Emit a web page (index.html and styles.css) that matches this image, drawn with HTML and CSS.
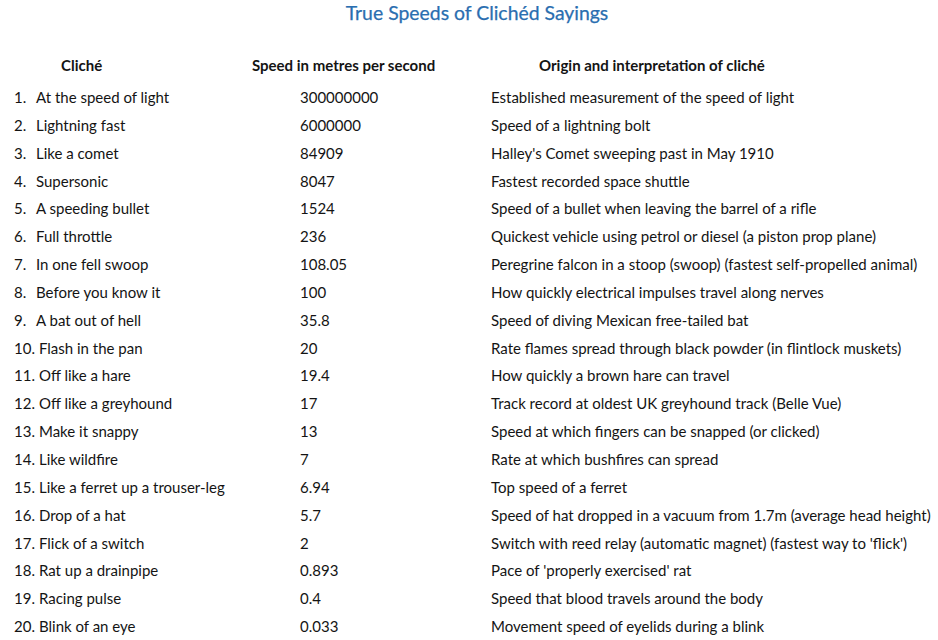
FILE: index.html
```html
<!DOCTYPE html>
<html>
<head>
<meta charset="utf-8">
<link rel="stylesheet" href="styles.css">
</head>
<body>
<div class="page">
  <h1 class="title">True Speeds of Clichéd Sayings</h1>
  <div class="table">
    <div class="row head">
      <div class="c1"><span class="h1c">Cliché</span></div>
      <div class="c2"><span class="h2c">Speed in metres per second</span></div>
      <div class="c3"><span class="h3c">Origin and interpretation of cliché</span></div>
    </div>
    <div class="row"><div class="c1"><span class="n">1.</span><span class="t">At the speed of light</span></div><div class="c2">300000000</div><div class="c3">Established measurement of the speed of light</div></div>
    <div class="row"><div class="c1"><span class="n">2.</span><span class="t">Lightning fast</span></div><div class="c2">6000000</div><div class="c3">Speed of a lightning bolt</div></div>
    <div class="row"><div class="c1"><span class="n">3.</span><span class="t">Like a comet</span></div><div class="c2">84909</div><div class="c3">Halley's Comet sweeping past in May 1910</div></div>
    <div class="row"><div class="c1"><span class="n">4.</span><span class="t">Supersonic</span></div><div class="c2">8047</div><div class="c3">Fastest recorded space shuttle</div></div>
    <div class="row"><div class="c1"><span class="n">5.</span><span class="t">A speeding bullet</span></div><div class="c2">1524</div><div class="c3">Speed of a bullet when leaving the barrel of a rifle</div></div>
    <div class="row"><div class="c1"><span class="n">6.</span><span class="t">Full throttle</span></div><div class="c2">236</div><div class="c3">Quickest vehicle using petrol or diesel (a piston prop plane)</div></div>
    <div class="row"><div class="c1"><span class="n">7.</span><span class="t">In one fell swoop</span></div><div class="c2">108.05</div><div class="c3">Peregrine falcon in a stoop (swoop) (fastest self-propelled animal)</div></div>
    <div class="row"><div class="c1"><span class="n">8.</span><span class="t">Before you know it</span></div><div class="c2">100</div><div class="c3">How quickly electrical impulses travel along nerves</div></div>
    <div class="row"><div class="c1"><span class="n">9.</span><span class="t">A bat out of hell</span></div><div class="c2">35.8</div><div class="c3">Speed of diving Mexican free-tailed bat</div></div>
    <div class="row"><div class="c1"><span class="n">10.</span><span class="t">Flash in the pan</span></div><div class="c2">20</div><div class="c3">Rate flames spread through black powder (in flintlock muskets)</div></div>
    <div class="row"><div class="c1"><span class="n">11.</span><span class="t">Off like a hare</span></div><div class="c2">19.4</div><div class="c3">How quickly a brown hare can travel</div></div>
    <div class="row"><div class="c1"><span class="n">12.</span><span class="t">Off like a greyhound</span></div><div class="c2">17</div><div class="c3">Track record at oldest UK greyhound track (Belle Vue)</div></div>
    <div class="row"><div class="c1"><span class="n">13.</span><span class="t">Make it snappy</span></div><div class="c2">13</div><div class="c3">Speed at which fingers can be snapped (or clicked)</div></div>
    <div class="row"><div class="c1"><span class="n">14.</span><span class="t">Like wildfire</span></div><div class="c2">7</div><div class="c3">Rate at which bushfires can spread</div></div>
    <div class="row"><div class="c1"><span class="n">15.</span><span class="t">Like a ferret up a trouser-leg</span></div><div class="c2">6.94</div><div class="c3">Top speed of a ferret</div></div>
    <div class="row"><div class="c1"><span class="n">16.</span><span class="t">Drop of a hat</span></div><div class="c2">5.7</div><div class="c3">Speed of hat dropped in a vacuum from 1.7m (average head height)</div></div>
    <div class="row"><div class="c1"><span class="n">17.</span><span class="t">Flick of a switch</span></div><div class="c2">2</div><div class="c3">Switch with reed relay (automatic magnet) (fastest way to 'flick')</div></div>
    <div class="row"><div class="c1"><span class="n">18.</span><span class="t">Rat up a drainpipe</span></div><div class="c2">0.893</div><div class="c3">Pace of 'properly exercised' rat</div></div>
    <div class="row"><div class="c1"><span class="n">19.</span><span class="t">Racing pulse</span></div><div class="c2">0.4</div><div class="c3">Speed that blood travels around the body</div></div>
    <div class="row"><div class="c1"><span class="n">20.</span><span class="t">Blink of an eye</span></div><div class="c2">0.033</div><div class="c3">Movement speed of eyelids during a blink</div></div>
  </div>
</div>
</body>
</html>
```
FILE: styles.css
```css
html, body {
  margin: 0;
  padding: 0;
  background: #ffffff;
}
.page {
  width: 938px;
  height: 640px;
  overflow: hidden;
  font-family: "Lato", "Open Sans", sans-serif;
  font-size: 15px;
  color: #141414;
}
.title {
  margin: 0;
  padding-top: 2px;
  height: 30px;
  line-height: 22px;
  text-align: center;
  font-size: 19.4px;
  font-weight: 400;
  color: #2a6eb0;
  padding-left: 16px;
  -webkit-text-stroke: 0.25px #2a6eb0;
}
.table {
  display: flex;
  flex-direction: column;
  padding-top: 21px;
}
.row {
  display: grid;
  grid-template-columns: 300px 191px 1fr;
  height: 27.85px;
  line-height: 27.85px;
  white-space: nowrap;
}
.head {
  font-weight: 700;
  height: 31px;
  line-height: 24px;
}
.h1c { padding-left: 61px; }
.h2c { margin-left: -48px; }
.h3c { padding-left: 48px; }
.c1 { display: flex; }
.n {
  box-sizing: border-box;
  margin-left: 14px;
  min-width: 22px;
  padding-right: 4px;
  flex: none;
  white-space: nowrap;
}
</style>
```
